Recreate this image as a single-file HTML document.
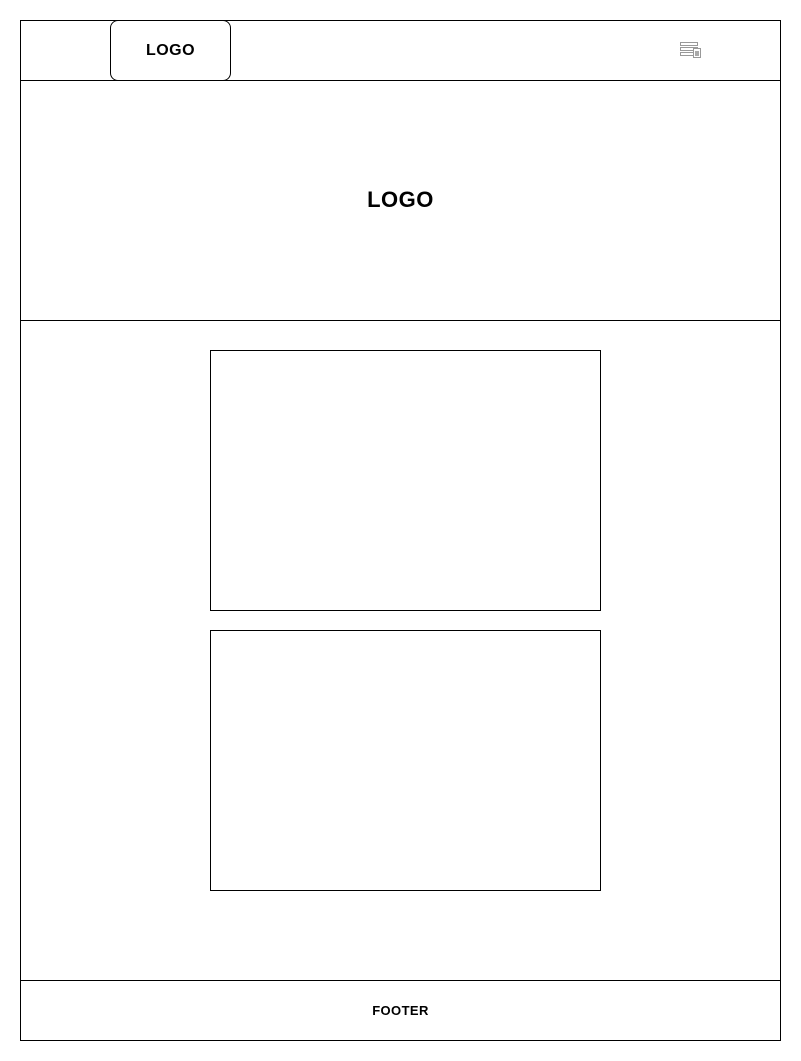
<!DOCTYPE html>
<html><head><style>
body{margin:0;width:801px;height:1061px;background:#fff;position:relative;font-family:"Liberation Sans",sans-serif;}
.b{position:absolute;border:1px solid #000;box-sizing:border-box;}
.t{position:absolute;font-weight:bold;text-align:center;color:#000;}
</style></head><body>
<div class="b" style="left:20px;top:20px;width:761px;height:61px;"></div>
<div class="b" style="left:110px;top:20px;width:121px;height:61px;border-radius:8px;background:#fff;"></div>
<div class="t" style="left:110px;top:42px;width:121px;font-size:16px;letter-spacing:0.5px;">LOGO</div>
<svg style="position:absolute;left:678px;top:40px" width="26" height="20">
<rect x="2.5" y="2.5" width="17" height="3" fill="#fff" stroke="#999"/>
<rect x="2.5" y="7.5" width="17" height="3" fill="#fff" stroke="#999"/>
<rect x="2.5" y="12.5" width="17" height="3" fill="#fff" stroke="#999"/>
<rect x="15.5" y="8.5" width="7" height="9" fill="#fff" stroke="#999"/>
<rect x="17" y="11" width="4" height="5" fill="#aaa"/>
</svg>
<div class="b" style="left:20px;top:80px;width:761px;height:241px;"></div>
<div class="t" style="left:20px;top:187px;width:761px;font-size:22px;letter-spacing:0.5px;">LOGO</div>
<div class="b" style="left:20px;top:320px;width:761px;height:661px;"></div>
<div class="b" style="left:210px;top:350px;width:391px;height:261px;"></div>
<div class="b" style="left:210px;top:630px;width:391px;height:261px;"></div>
<div class="b" style="left:20px;top:980px;width:761px;height:61px;"></div>
<div class="t" style="left:20px;top:1003px;width:761px;font-size:13px;letter-spacing:0.4px;">FOOTER</div>
</body></html>
